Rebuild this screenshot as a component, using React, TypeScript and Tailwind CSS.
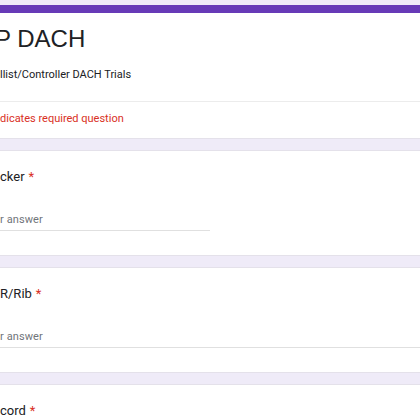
const questions = [
  { title: 'cker', wide: false },
  { title: 'R/Rib', wide: true },
  { title: 'cord', wide: true },
]

function Question({ title, wide }: { title: string; wide: boolean }) {
  return (
    <div className="border-y border-[#e4e1ea] bg-white pb-[24px] pt-[16px]">
      <p className="text-[13px] leading-[20px] text-[#202124] font-['Roboto',sans-serif]">
        {title}
        <span className="ml-[4px] text-[#d93025]">*</span>
      </p>
      <div
        className={`mt-[25px] border-b border-[#e0e0e0] pb-[2px] ${wide ? 'w-full' : 'w-[210px]'}`}
      >
        <span className="block text-[11px] leading-[16px] tracking-[0.01em] text-[#70757a] font-['Roboto',sans-serif]">
          r answer
        </span>
      </div>
    </div>
  )
}

export default function App() {
  return (
    <div className="h-[420px] w-[420px] overflow-hidden bg-[#efebf8] pt-[5px]">
      <div className="flex flex-col gap-[11px]">
        <div className="border-t-[8px] border-[#673ab7] border-b border-b-[#e4e1ea] bg-white">
          <div className="border-b border-[#ececec] pb-[18px] pt-[11px]">
            <h1 className="-ml-[5px] text-[24px] leading-[30px] text-[#202124] font-['Liberation_Sans',Arial,sans-serif]">
              P DACH
            </h1>
            <p className="mt-[13px] text-[11px] leading-[16px] text-[#202124] font-['Roboto',sans-serif]">
              llist/Controller DACH Trials
            </p>
          </div>
          <p className="pb-[11px] pt-[9px] text-[11px] leading-[16px] text-[#d93025] font-['Roboto',sans-serif]">
            dicates required question
          </p>
        </div>
        {questions.map((q) => (
          <Question key={q.title} title={q.title} wide={q.wide} />
        ))}
      </div>
    </div>
  )
}
